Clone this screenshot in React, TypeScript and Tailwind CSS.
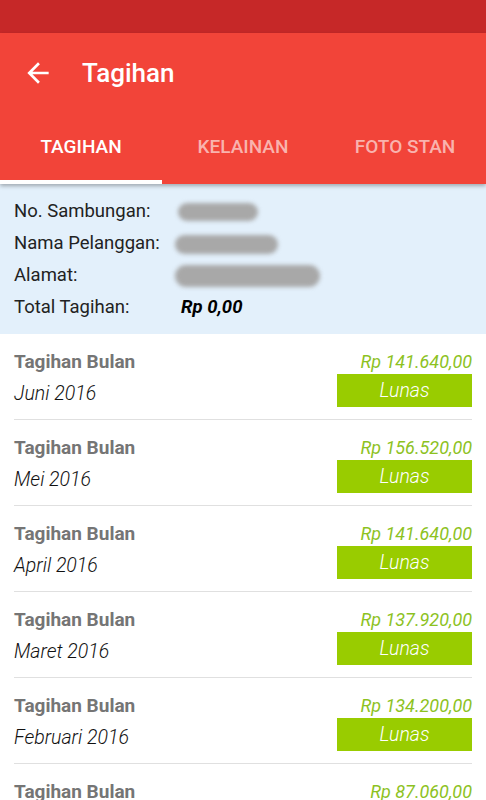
import React from "react";

const items = [
  { month: "Juni 2016", amount: "Rp 141.640,00" },
  { month: "Mei 2016", amount: "Rp 156.520,00" },
  { month: "April 2016", amount: "Rp 141.640,00" },
  { month: "Maret 2016", amount: "Rp 137.920,00" },
  { month: "Februari 2016", amount: "Rp 134.200,00" },
  { month: "Januari 2016", amount: "Rp 87.060,00" },
];

export default function App() {
  return (
    <div className="w-[486px] h-[800px] overflow-hidden bg-white" style={{ fontFamily: "Roboto, 'Noto Sans', sans-serif" }}>
      <div className="h-[33px] bg-[#c62828]" />
      <div className="relative z-10 bg-[#f24439] shadow-[0_2px_4px_rgba(0,0,0,0.3)]">
        <div className="h-[79px] flex items-center">
          <svg className="ml-[22px]" width="32" height="32" viewBox="0 0 24 24" fill="white">
            <path d="M20 11H7.83l5.59-5.59L12 4l-8 8 8 8 1.41-1.41L7.83 13H20v-2z" />
          </svg>
          <div className="ml-[28px] text-white text-[26px] font-medium leading-none">Tagihan</div>
        </div>
        <div className="h-[72px] flex">
          <div className="w-[162px] relative flex items-center justify-center text-white text-[19px] font-medium pb-[1px]">
            TAGIHAN
            <div className="absolute left-0 right-0 bottom-0 h-[4px] bg-white" />
          </div>
          <div className="w-[162px] flex items-center justify-center text-[#f9b3ae] text-[19px] font-medium pb-[1px]">KELAINAN</div>
          <div className="w-[162px] flex items-center justify-center text-[#f9b3ae] text-[19px] font-medium pb-[1px]">FOTO STAN</div>
        </div>
      </div>
      <div className="bg-[#e3f0fb] pt-[12px] pb-[10px] px-[14px] text-[18.5px] text-[#222]">
        <div className="h-[32px] flex items-center">
          <div className="w-[164px]">No. Sambungan:</div>
          <div className="w-[80px] h-[18px] rounded-full bg-[#a8a8a8] blur-[2px]" />
        </div>
        <div className="h-[32px] flex items-center">
          <div className="w-[161px]">Nama Pelanggan:</div>
          <div className="w-[103px] h-[19px] rounded-full bg-[#a8a8a8] blur-[2px]" />
        </div>
        <div className="h-[32px] flex items-center">
          <div className="w-[161px]">Alamat:</div>
          <div className="w-[145px] h-[22px] rounded-full bg-[#a8a8a8] blur-[2px]" />
        </div>
        <div className="h-[32px] flex items-center">
          <div className="w-[167px]">Total Tagihan:</div>
          <div className="font-bold italic text-black">Rp 0,00</div>
        </div>
      </div>
      <div className="px-[14px]">
        {items.map((it) => (
          <div key={it.month + it.amount} className="flex justify-between pt-[17px] pb-[12px] border-b border-[#e0e0e0]">
            <div className="flex flex-col">
              <div className="h-[22px] leading-[22px] text-[19px] font-bold text-[#757575]">Tagihan Bulan</div>
              <div className="mt-[10px] h-[22px] leading-[22px] text-[19.5px] italic font-light text-[#111]">{it.month}</div>
            </div>
            <div className="flex flex-col items-end">
              <div className="h-[22px] leading-[22px] text-[18px] italic text-[#8dc21f]">{it.amount}</div>
              <div className="mt-[1px] w-[135px] h-[33px] bg-[#99cc00] flex items-center justify-center text-white text-[19.5px] italic font-light">Lunas</div>
            </div>
          </div>
        ))}
      </div>
    </div>
  );
}
